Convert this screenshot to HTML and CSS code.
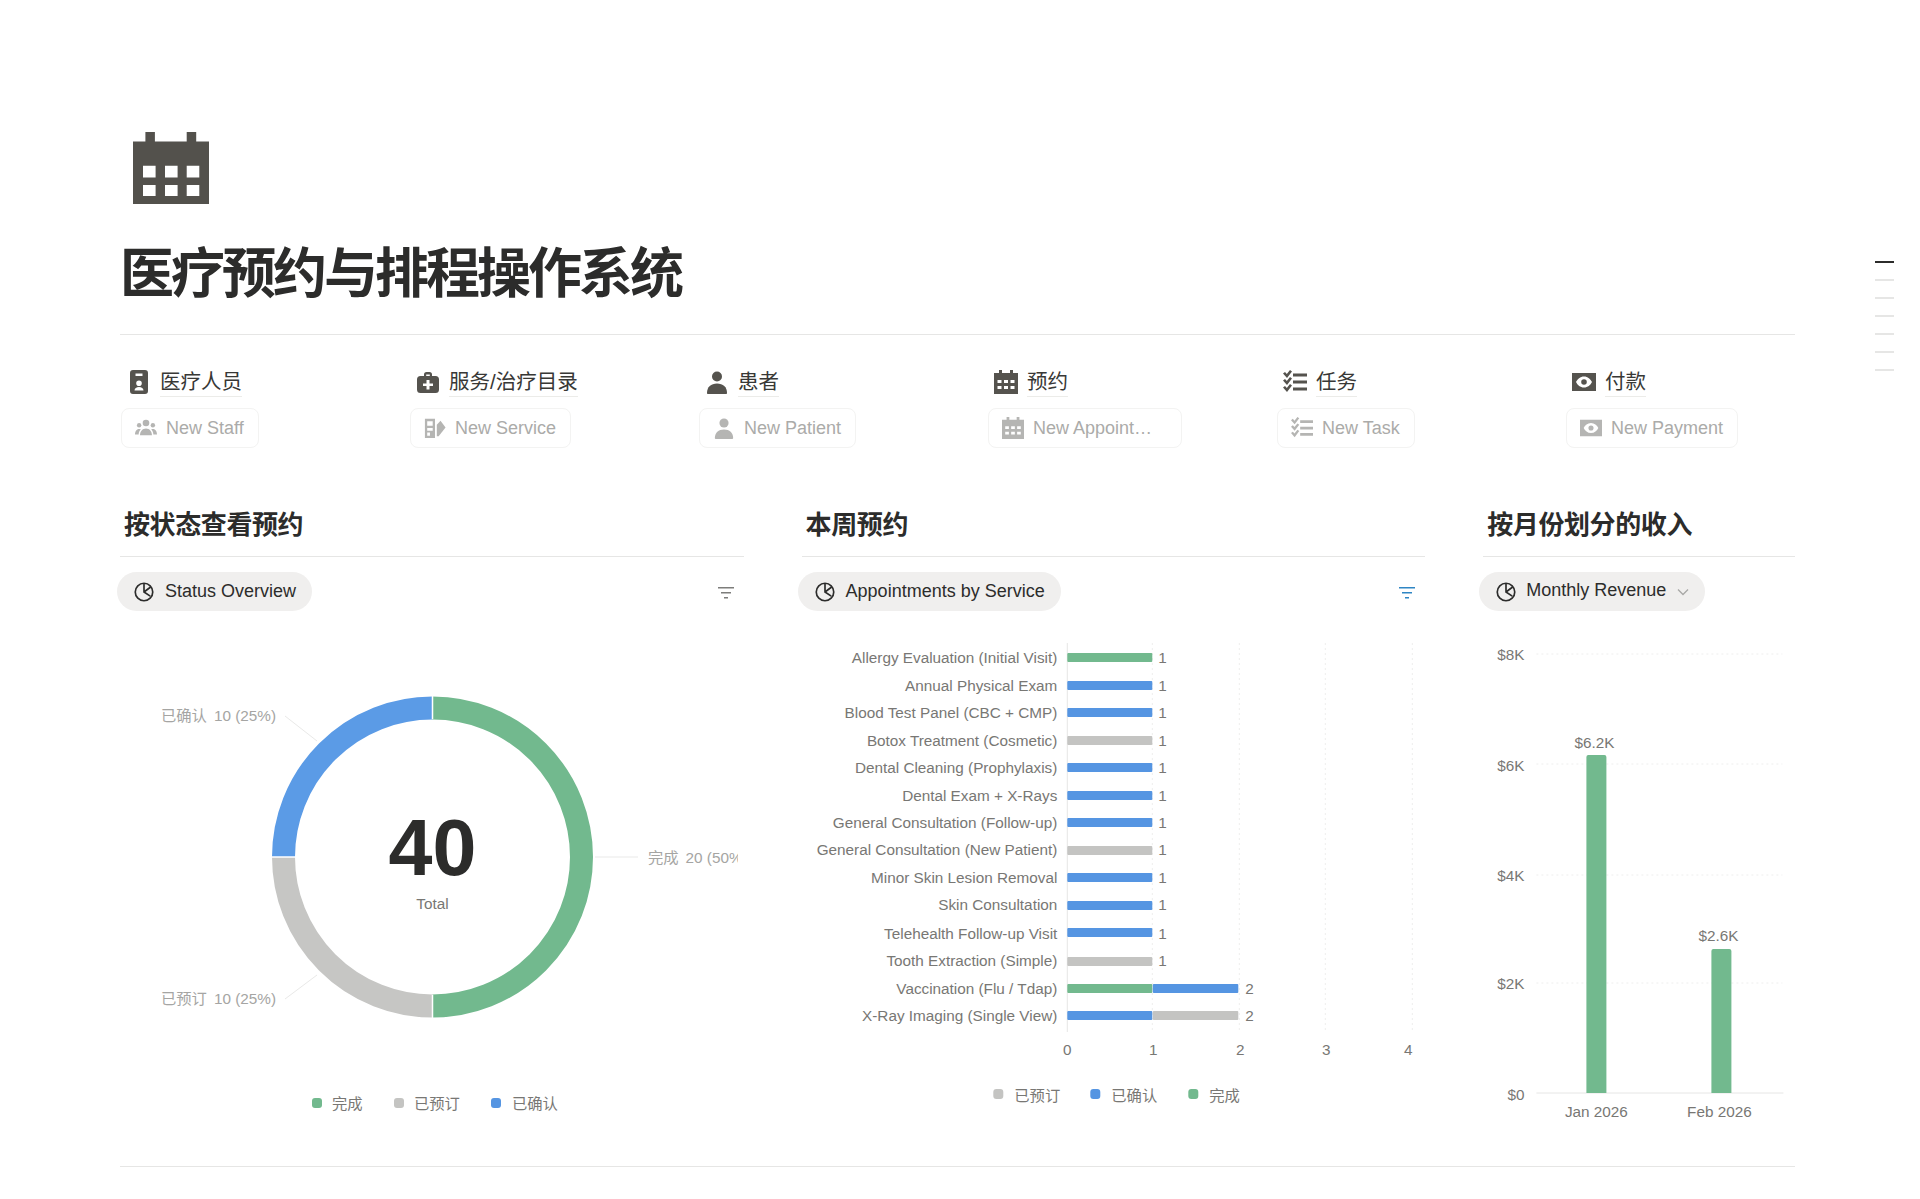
FILE: index.html
```html
<!DOCTYPE html>
<html lang="zh-CN">

<head>
    <meta charset="UTF-8">
    <title>医疗预约与排程操作系统</title>
    <link rel="stylesheet" href="styles.css">
</head>

<body>
    <svg class="sprite" xmlns="http://www.w3.org/2000/svg">
        <symbol id="i-badge" viewBox="0 0 24 24">
            <path fill-rule="evenodd" d="M6 0h12a3 3 0 0 1 3 3v18a3 3 0 0 1-3 3H6a3 3 0 0 1-3-3V3a3 3 0 0 1 3-3zm2.500 3.500v2.500h7V3.500zM12 10.500a2.800 2.800 0 1 0 0 5.600 2.800 2.800 0 0 0 0-5.600zm-4.500 10h9c0-2-2-3.400-4.500-3.400s-4.500 1.400-4.500 3.400z" />
        </symbol>
        <symbol id="i-bag" viewBox="0 0 24 24">
            <path fill-rule="evenodd" d="M8 6V4.500A2.500 2.500 0 0 1 10.500 2h3A2.500 2.500 0 0 1 16 4.500V6h3.500A3.500 3.500 0 0 1 23 9.500v10a3.500 3.500 0 0 1-3.500 3.500h-15A3.500 3.500 0 0 1 1 19.500v-10A3.500 3.500 0 0 1 4.500 6zm2.200 0h3.600V4.400h-3.600zm.3 4v3.500H7v2.500h3.500v3.500h3V16H17v-2.500h-3.500V10z" />
        </symbol>
        <symbol id="i-person" viewBox="0 0 24 24">
            <circle cx="12" cy="6.500" r="5" />
            <path d="M2 23c0-6 4-9.500 10-9.500S22 17 22 23c0 .6-.4 1-1 1H3c-.6 0-1-.4-1-1z" />
        </symbol>
        <symbol id="i-cal" viewBox="0 0 24 24">
            <path fill-rule="evenodd" d="M5 0h3v3h8V0h3v3h5v21H0V3h5zM3.500 10v3h4v-3zm6.500 0v3h4v-3zm6.500 0v3h4v-3zM3.500 16v3h4v-3zm6.500 0v3h4v-3zm6.500 0v3h4v-3z" />
        </symbol>
        <symbol id="i-check" viewBox="0 0 24 24">
            <path d="M10 3.500h14v3H10zM10 10.500h14v3H10zM10 17.500h14v3H10z" />
            <path d="M0 3.500l2-1.500 1.800 2L7 0l2 1.400-5 6.600zM0 10.500l2-1.500 1.800 2L7 7l2 1.400-5 6.600zM0 17.500l2-1.500 1.800 2L7 14l2 1.400-5 6.600z" />
        </symbol>
        <symbol id="i-money" viewBox="0 0 24 24">
            <path fill-rule="evenodd" d="M0 3h24v18H0zM12 6.500c-3.800 0-6.500 2.500-8 5.500 1.500 3 4.200 5.500 8 5.500s6.500-2.500 8-5.500c-1.500-3-4.200-5.500-8-5.500zm0 2.700a2.800 2.800 0 1 1 0 5.600 2.800 2.800 0 0 1 0-5.600z" />
        </symbol>
        <symbol id="i-group" viewBox="0 0 24 24">
            <circle cx="12" cy="6.500" r="3.600" />
            <circle cx="4.500" cy="9" r="2.400" />
            <circle cx="19.500" cy="9" r="2.400" />
            <path d="M5.500 20c0-4.500 2.700-7.500 6.500-7.500s6.500 3 6.500 7.500zM0 19c0-3 1.500-6 4.500-6 .7 0 1.300.1 1.800.4C4.800 15 4 17 4 19zM24 19c0-3-1.500-6-4.500-6-.7 0-1.300.1-1.800.4 1.500 1.600 2.300 3.600 2.300 5.600z" />
        </symbol>
        <symbol id="i-service" viewBox="0 0 24 24">
            <path fill-rule="evenodd" d="M1 2h11v21H1zM3.500 4.500v5h6v-5zm0 7.500v3h6v-3zm0 5v3.500h3V17z" />
            <path d="M14 8.500L18 4l5.500 7.500L16 21h-2z" />
        </symbol>
        <symbol id="i-pie" viewBox="0 0 24 24">
            <circle cx="12" cy="12" r="10.500" fill="none" stroke="currentColor" stroke-width="2" />
            <path d="M12 2v10l7.500 5M12 12l8-6" fill="none" stroke="currentColor" stroke-width="2" />
        </symbol>
        <symbol id="i-filter" viewBox="0 0 16 12">
            <path d="M0 0h16v1.500H0zM3 5h10v1.500H3zM6 10h4v1.500H6z" />
        </symbol>
    </svg>

    <nav class="outline">
        <span class="outline-on"></span>
        <span></span>
        <span></span>
        <span></span>
        <span></span>
        <span></span>
        <span></span>
    </nav>

    <main class="page">
        <svg class="page-icon" viewBox="0 0 76 72">
            <path fill-rule="evenodd" d="M12.400 0h9.500v9.400h31.800V0h9.500v9.400H76V72H0V9.400h12.400zM10 33.800v11.600h12.600V33.800zm22 0v11.600h12.600V33.800zm21.700 0v11.600h12.600V33.800zM10 53v11h12.600V53zm22 0v11h12.600V53zm21.700 0v11h12.600V53z" />
        </svg>
        <h1 class="page-title">医疗预约与排程操作系统</h1>
        <hr class="rule">

        <section class="links">
            <div class="link-col">
                <div class="link-head">
                    <svg class="head-icon"><use href="#i-badge" /></svg>
                    <span class="head-text">医疗人员</span>
                </div>
                <div class="new-btn">
                    <svg class="btn-icon"><use href="#i-group" /></svg>
                    <span>New Staff</span>
                </div>
            </div>
            <div class="link-col">
                <div class="link-head">
                    <svg class="head-icon"><use href="#i-bag" /></svg>
                    <span class="head-text">服务/治疗目录</span>
                </div>
                <div class="new-btn">
                    <svg class="btn-icon"><use href="#i-service" /></svg>
                    <span>New Service</span>
                </div>
            </div>
            <div class="link-col">
                <div class="link-head">
                    <svg class="head-icon"><use href="#i-person" /></svg>
                    <span class="head-text">患者</span>
                </div>
                <div class="new-btn">
                    <svg class="btn-icon"><use href="#i-person" /></svg>
                    <span>New Patient</span>
                </div>
            </div>
            <div class="link-col">
                <div class="link-head">
                    <svg class="head-icon"><use href="#i-cal" /></svg>
                    <span class="head-text">预约</span>
                </div>
                <div class="new-btn new-btn-wide">
                    <svg class="btn-icon"><use href="#i-cal" /></svg>
                    <span>New Appoint…</span>
                </div>
            </div>
            <div class="link-col">
                <div class="link-head">
                    <svg class="head-icon"><use href="#i-check" /></svg>
                    <span class="head-text">任务</span>
                </div>
                <div class="new-btn">
                    <svg class="btn-icon"><use href="#i-check" /></svg>
                    <span>New Task</span>
                </div>
            </div>
            <div class="link-col">
                <div class="link-head">
                    <svg class="head-icon"><use href="#i-money" /></svg>
                    <span class="head-text">付款</span>
                </div>
                <div class="new-btn">
                    <svg class="btn-icon"><use href="#i-money" /></svg>
                    <span>New Payment</span>
                </div>
            </div>
        </section>

        <section class="charts">
            <div class="chart-col">
                <h3 class="chart-title">按状态查看预约</h3>
                <div class="toolbar">
                    <div class="pill pill-first">
                        <svg class="pill-icon"><use href="#i-pie" /></svg>
                        <span>Status Overview</span>
                    </div>
                    <svg class="filter"><use href="#i-filter" /></svg>
                </div>
                <svg class="chart chart-donut" viewBox="120 611 618 545">
                    <path class="seg-green" d="M432.500 708A149 149 0 0 1 432.500 1006" />
                    <path class="seg-grey" d="M432.500 1006A149 149 0 0 1 283.500 857" />
                    <path class="seg-blue" d="M283.500 857A149 149 0 0 1 432.500 708" />
                    <path class="seg-gap" d="M432.500 695v24M432.500 995v24M271 857h24" />
                    <path class="leader" d="M285 716L317 741M285 999L317 975M595 857H638" />
                    <text class="big-num" x="432.500" y="875">40</text>
                    <text class="mid" x="432.500" y="909">Total</text>
                    <text class="soft end" x="276" y="721">已确认<tspan dx="7">10 (25%)</tspan></text>
                    <text class="soft end" x="276" y="1004">已预订<tspan dx="7">10 (25%)</tspan></text>
                    <text class="soft" x="648" y="863">完成<tspan dx="7">20 (50%)</tspan></text>
                    <rect class="fill-green" x="312" y="1098" width="10" height="10" rx="3" />
                    <text class="lab" x="332" y="1109">完成</text>
                    <rect class="fill-grey" x="394" y="1098" width="10" height="10" rx="3" />
                    <text class="lab" x="414" y="1109">已预订</text>
                    <rect class="fill-blue" x="491" y="1098" width="10" height="10" rx="3" />
                    <text class="lab" x="512" y="1109">已确认</text>
                </svg>
            </div>

            <div class="chart-col">
                <h3 class="chart-title">本周预约</h3>
                <div class="toolbar">
                    <div class="pill">
                        <svg class="pill-icon"><use href="#i-pie" /></svg>
                        <span>Appointments by Service</span>
                    </div>
                    <svg class="filter filter-on"><use href="#i-filter" /></svg>
                </div>
                <svg class="chart" viewBox="802 611 623 545">
                    <path class="grid-v" d="M1152 643V1032M1239 643V1032M1325 643V1032M1412 643V1032" />
                    <path class="axis" d="M1067 643V1032" />

                    <text class="lab end" x="1057" y="663">Allergy Evaluation (Initial Visit)</text>
                    <text class="lab end" x="1057" y="691">Annual Physical Exam</text>
                    <text class="lab end" x="1057" y="718">Blood Test Panel (CBC + CMP)</text>
                    <text class="lab end" x="1057" y="746">Botox Treatment (Cosmetic)</text>
                    <text class="lab end" x="1057" y="773">Dental Cleaning (Prophylaxis)</text>
                    <text class="lab end" x="1057" y="801">Dental Exam + X-Rays</text>
                    <text class="lab end" x="1057" y="828">General Consultation (Follow-up)</text>
                    <text class="lab end" x="1057" y="855">General Consultation (New Patient)</text>
                    <text class="lab end" x="1057" y="883">Minor Skin Lesion Removal</text>
                    <text class="lab end" x="1057" y="910">Skin Consultation</text>
                    <text class="lab end" x="1057" y="939">Telehealth Follow-up Visit</text>
                    <text class="lab end" x="1057" y="966">Tooth Extraction (Simple)</text>
                    <text class="lab end" x="1057" y="994">Vaccination (Flu / Tdap)</text>
                    <text class="lab end" x="1057" y="1021">X-Ray Imaging (Single View)</text>

                    <rect class="fill-green" x="1067" y="653" width="85" height="9" rx="1" />
                    <rect class="fill-blue" x="1067" y="681" width="85" height="9" rx="1" />
                    <rect class="fill-blue" x="1067" y="708" width="85" height="9" rx="1" />
                    <rect class="fill-grey" x="1067" y="736" width="85" height="9" rx="1" />
                    <rect class="fill-blue" x="1067" y="763" width="85" height="9" rx="1" />
                    <rect class="fill-blue" x="1067" y="791" width="85" height="9" rx="1" />
                    <rect class="fill-blue" x="1067" y="818" width="85" height="9" rx="1" />
                    <rect class="fill-grey" x="1067" y="846" width="85" height="9" rx="1" />
                    <rect class="fill-blue" x="1067" y="873" width="85" height="9" rx="1" />
                    <rect class="fill-blue" x="1067" y="901" width="85" height="9" rx="1" />
                    <rect class="fill-blue" x="1067" y="928" width="85" height="9" rx="1" />
                    <rect class="fill-grey" x="1067" y="957" width="85" height="9" rx="1" />
                    <rect class="fill-green" x="1067" y="984" width="85" height="9" rx="1" />
                    <rect class="fill-blue" x="1152.500" y="984" width="85.500" height="9" rx="1" />
                    <rect class="fill-blue" x="1067" y="1011" width="85" height="9" rx="1" />
                    <rect class="fill-grey" x="1152.500" y="1011" width="85.500" height="9" rx="1" />

                    <text class="lab" x="1158" y="663">1</text>
                    <text class="lab" x="1158" y="691">1</text>
                    <text class="lab" x="1158" y="718">1</text>
                    <text class="lab" x="1158" y="746">1</text>
                    <text class="lab" x="1158" y="773">1</text>
                    <text class="lab" x="1158" y="801">1</text>
                    <text class="lab" x="1158" y="828">1</text>
                    <text class="lab" x="1158" y="855">1</text>
                    <text class="lab" x="1158" y="883">1</text>
                    <text class="lab" x="1158" y="910">1</text>
                    <text class="lab" x="1158" y="939">1</text>
                    <text class="lab" x="1158" y="966">1</text>
                    <text class="lab" x="1245" y="994">2</text>
                    <text class="lab" x="1245" y="1021">2</text>

                    <text class="lab mid" x="1067" y="1055">0</text>
                    <text class="lab mid" x="1153" y="1055">1</text>
                    <text class="lab mid" x="1240" y="1055">2</text>
                    <text class="lab mid" x="1326" y="1055">3</text>
                    <text class="lab mid" x="1408" y="1055">4</text>

                    <rect class="fill-grey" x="993" y="1089" width="10" height="10" rx="3" />
                    <text class="lab" x="1014" y="1101">已预订</text>
                    <rect class="fill-blue" x="1090" y="1089" width="10" height="10" rx="3" />
                    <text class="lab" x="1111" y="1101">已确认</text>
                    <rect class="fill-green" x="1188" y="1089" width="10" height="10" rx="3" />
                    <text class="lab" x="1209" y="1101">完成</text>
                </svg>
            </div>

            <div class="chart-col">
                <h3 class="chart-title">按月份划分的收入</h3>
                <div class="toolbar">
                    <div class="pill">
                        <svg class="pill-icon"><use href="#i-pie" /></svg>
                        <span class="pill-up">Monthly Revenue</span>
                        <svg class="chevron" viewBox="0 0 12 8"><path d="M1 1.500l5 5 5-5" /></svg>
                    </div>
                </div>
                <svg class="chart" viewBox="1484 611 311 545">
                    <path class="grid-h" d="M1537 654H1783M1537 764H1783M1537 875H1783M1537 983H1783" />
                    <path class="axis" d="M1537 1093H1784" />
                    <text class="lab end" x="1525" y="660">$8K</text>
                    <text class="lab end" x="1525" y="771">$6K</text>
                    <text class="lab end" x="1525" y="881">$4K</text>
                    <text class="lab end" x="1525" y="989">$2K</text>
                    <text class="lab end" x="1525" y="1100">$0</text>
                    <path class="fill-green" d="M1587 757a2 2 0 0 1 2-2h16a2 2 0 0 1 2 2V1093h-20z" />
                    <path class="fill-green" d="M1712 951a2 2 0 0 1 2-2h16a2 2 0 0 1 2 2V1093h-20z" />
                    <text class="lab mid" x="1595" y="748">$6.2K</text>
                    <text class="lab mid" x="1719" y="941">$2.6K</text>
                    <text class="lab mid" x="1597" y="1117">Jan 2026</text>
                    <text class="lab mid" x="1720" y="1117">Feb 2026</text>
                </svg>
            </div>
        </section>
        <hr class="rule rule-end">
    </main>
</body>

</html>
```

FILE: styles.css
```css
* {
    box-sizing: border-box;
}

body {
    margin: 0;
    background: #fff;
    color: #2c2c2b;
    font-family: "Liberation Sans", "Noto Sans CJK SC", sans-serif;
}

.sprite {
    display: none;
}

.page {
    padding: 132px 125px 0 120px;
}

.page-icon {
    display: block;
    width: 76px;
    height: 72px;
    margin-left: 13px;
    fill: #53514c;
}

.page-title {
    margin: 30px 0 20px;
    font-size: 54px;
    letter-spacing: -3px;
    line-height: 80px;
    font-weight: 700;
}

.rule {
    margin: 0;
    border: none;
    border-top: 1px solid #e6e6e5;
}

.rule-end {
    margin-top: 10px;
}

.links {
    display: grid;
    grid-template-columns: repeat(5, 289px) 1fr;
    margin: 32px 0 0 1px;
}

.link-head {
    display: flex;
    align-items: center;
    height: 30px;
    padding-left: 6px;
    gap: 9px;
}

.head-icon {
    width: 24px;
    height: 24px;
    fill: #55534e;
}

.head-text {
    font-size: 20.500px;
    line-height: 29px;
    color: #383836;
    border-bottom: 1px solid #ecece9;
}

.new-btn {
    display: inline-flex;
    align-items: center;
    height: 40px;
    margin-top: 11px;
    padding: 0 14px 0 11px;
    gap: 7px;
    border: 1px solid #f3f3f2;
    border-radius: 8px;
    font-size: 18px;
    color: #ababa9;
}

.new-btn-wide {
    width: 194px;
}

.btn-icon {
    width: 26px;
    height: 22px;
    fill: #b5b5b3;
}

.charts {
    display: grid;
    grid-template-columns: 2fr 2fr 1fr;
    column-gap: 58px;
    margin-top: 58px;
}

.chart-title {
    margin: 0;
    padding: 1px 0 13px 4px;
    font-size: 26px;
    letter-spacing: -0.400px;
    line-height: 36px;
    font-weight: 700;
    border-bottom: 1px solid #e6e6e5;
}

.toolbar {
    display: flex;
    align-items: center;
    justify-content: space-between;
    margin-top: 15px;
    padding-right: 10px;
}

.pill {
    display: flex;
    align-items: center;
    height: 39px;
    margin-left: -4px;
    padding: 0 16px 0 17px;
    gap: 11px;
    border-radius: 20px;
    background: #f0efee;
    font-size: 18px;
}

.pill-first {
    margin-left: -3px;
}

.pill-up {
    margin: -2px 0 0 -1px;
}

.pill-icon {
    width: 20px;
    height: 20px;
    fill: none;
    color: #2c2c2b;
}

.chevron {
    width: 12px;
    height: 8px;
    fill: none;
    stroke: #a8a8a6;
    stroke-width: 1.300;
}

.filter {
    width: 16px;
    height: 12px;
    margin-top: 2px;
    fill: #7d7d7b;
}

.filter-on {
    fill: #2f86c4;
}

.chart {
    display: block;
    height: 545px;
    font-size: 15.300px;
    fill: #787774;
}

.chart-col .chart {
    width: 100%;
}

.chart-col .chart-donut {
    width: 618px;
}

.seg-green,
.seg-grey,
.seg-blue {
    fill: none;
    stroke-width: 23;
}

.seg-green {
    stroke: #72b98e;
}

.seg-grey {
    stroke: #c6c6c4;
}

.seg-blue {
    stroke: #5b9be6;
}

.seg-gap {
    fill: none;
    stroke: #fff;
    stroke-width: 1.500;
}

.leader {
    fill: none;
    stroke: #e9e9e8;
}

.big-num {
    font-size: 79px;
    font-weight: 700;
    fill: #2c2c2b;
    text-anchor: middle;
}

.soft {
    fill: #a5a5a3;
}

.mid {
    text-anchor: middle;
}

.end {
    text-anchor: end;
}

.fill-green {
    fill: #72b98e;
}

.fill-grey {
    fill: #c4c4c2;
}

.fill-blue {
    fill: #5595e2;
}

.axis {
    fill: none;
    stroke: #e6e6e5;
}

.grid-v,
.grid-h {
    fill: none;
    stroke: #eeeeed;
    stroke-dasharray: 2 3;
}

.outline {
    position: absolute;
    top: 261px;
    right: 26px;
    display: flex;
    flex-direction: column;
    gap: 16px;
    width: 19px;
}

.outline span {
    height: 2px;
    background: #e6e6e5;
}

.outline .outline-on {
    background: #2c2c2b;
}
```
